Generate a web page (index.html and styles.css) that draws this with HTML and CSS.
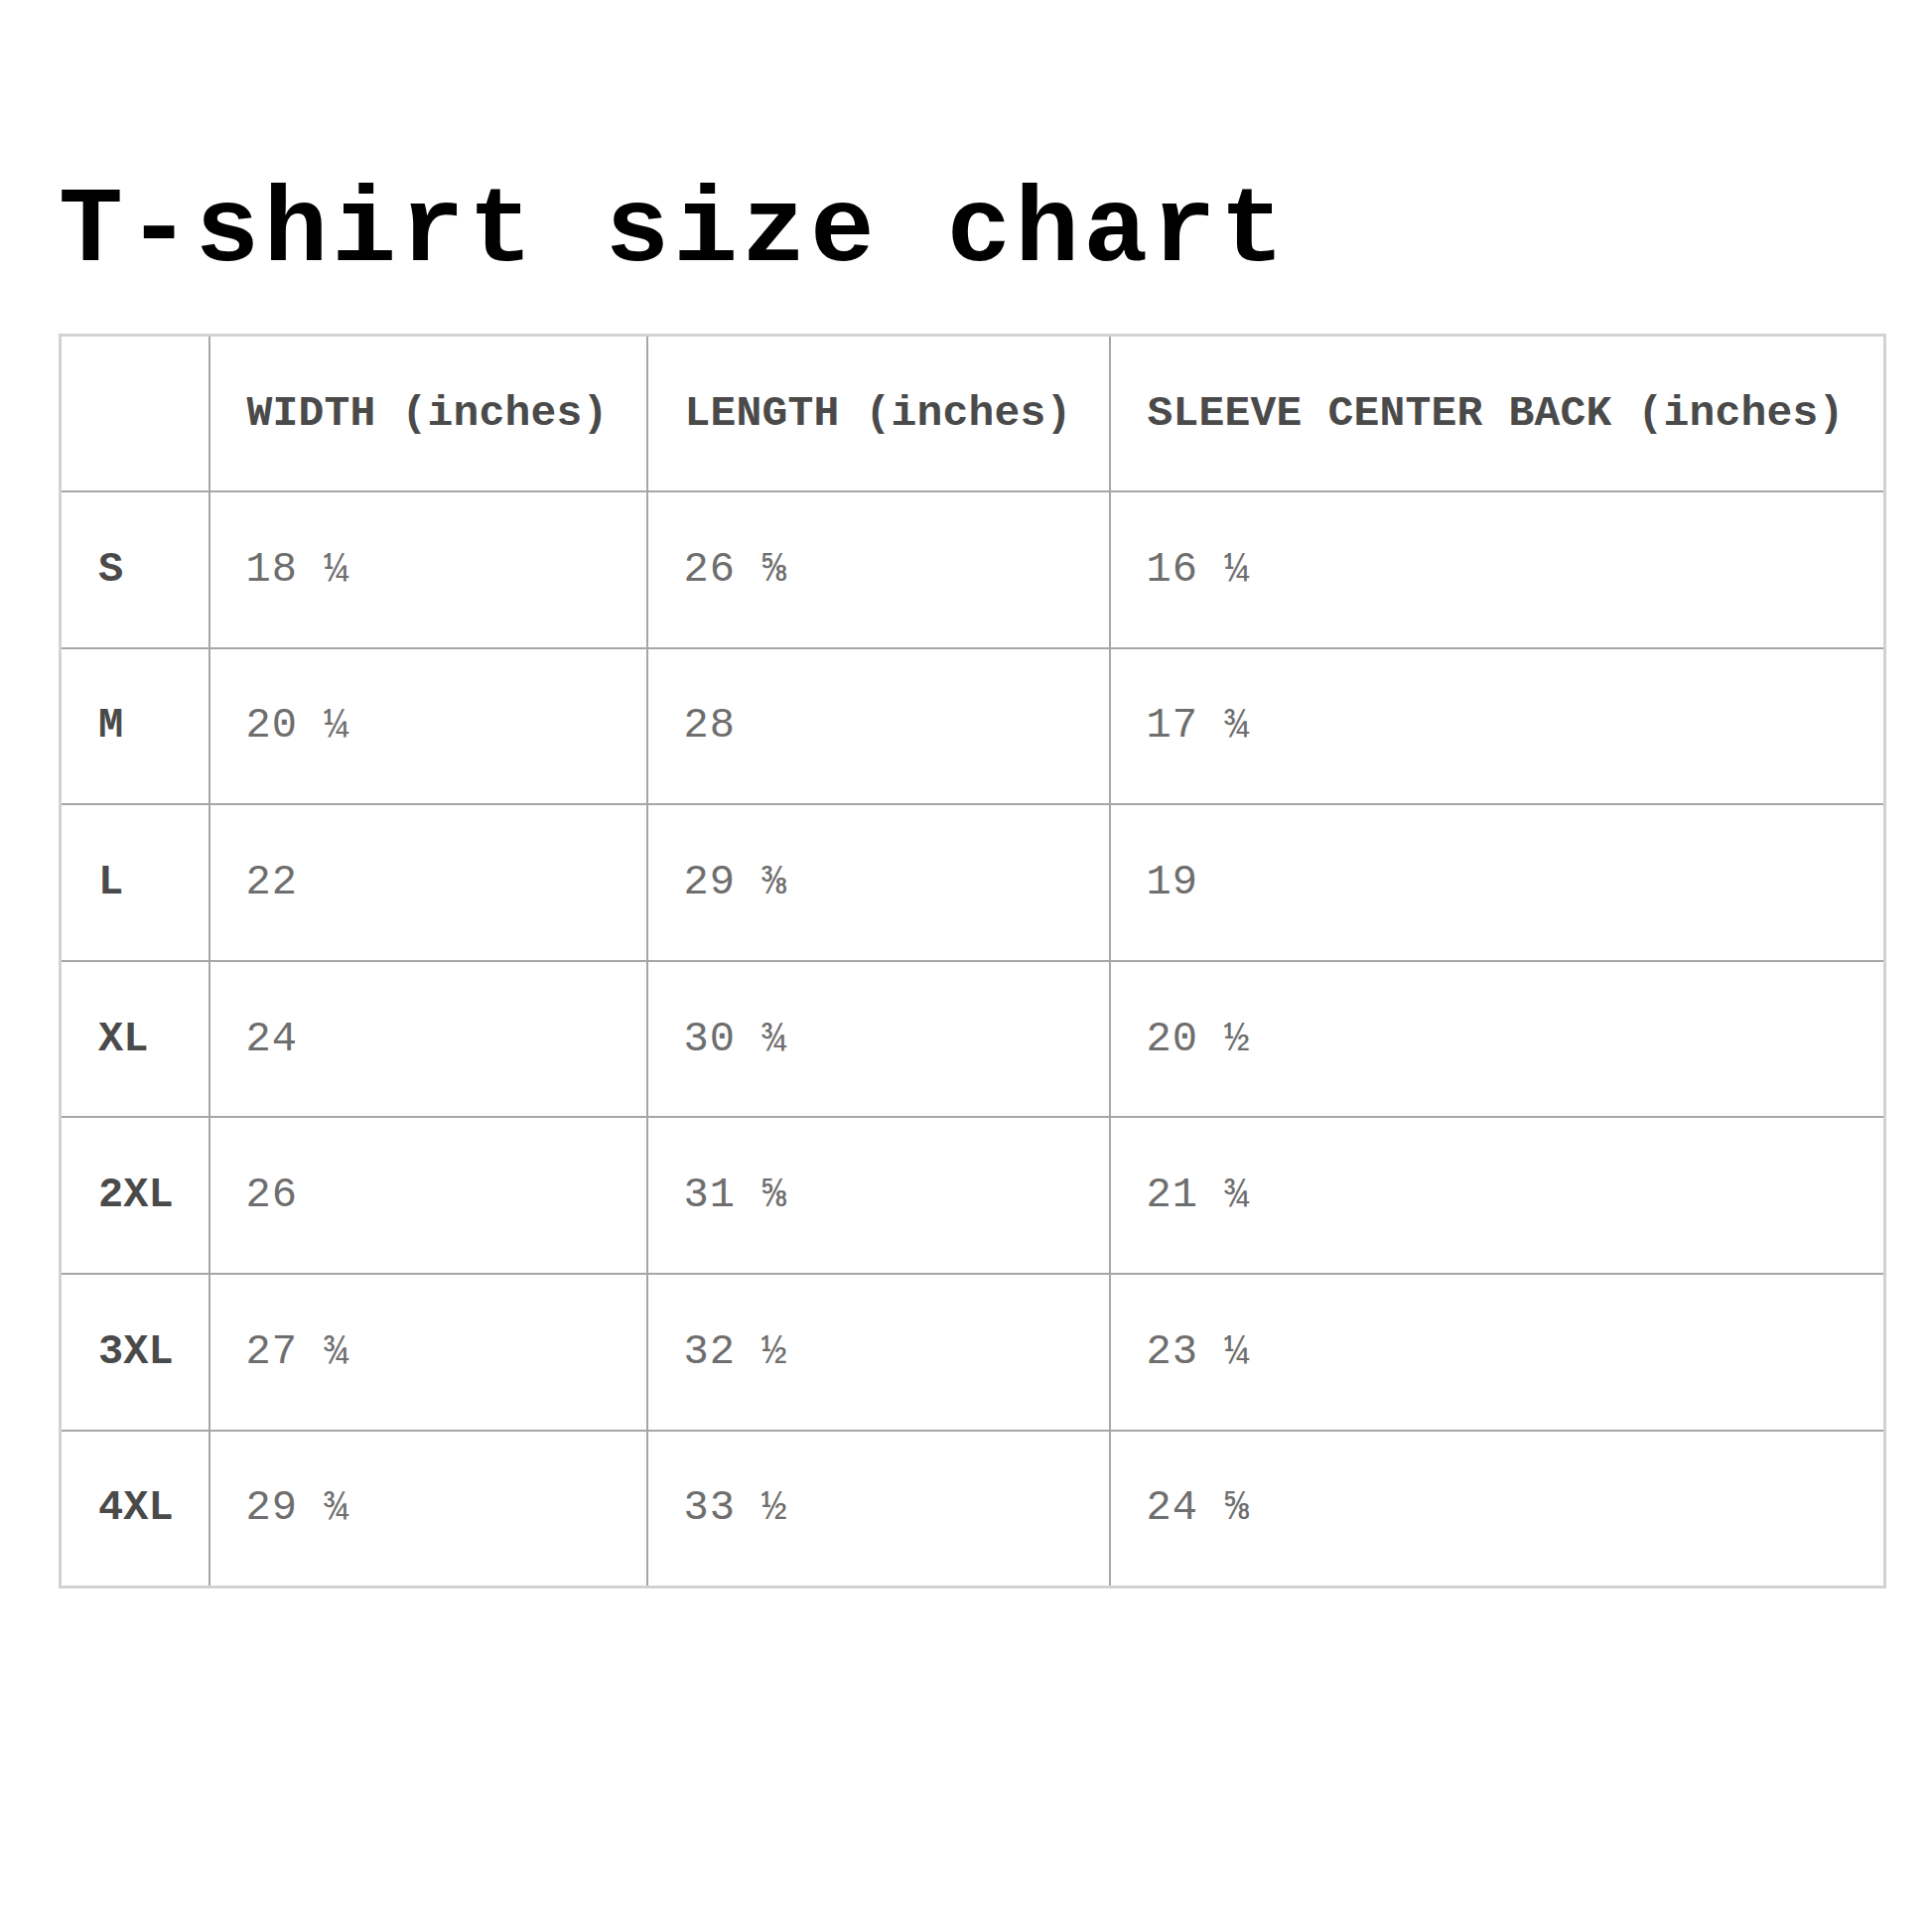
FILE: index.html
```html
<!DOCTYPE html>
<html lang="en">
<head>
<meta charset="utf-8">
<title>T-shirt size chart</title>
<link rel="stylesheet" href="styles.css">
</head>
<body>
<main class="page">
  <h1 class="title">T-shirt size chart</h1>
  <table class="chart">
    <colgroup>
      <col class="c-size">
      <col class="c-width">
      <col class="c-length">
      <col class="c-sleeve">
    </colgroup>
    <thead>
      <tr>
        <th></th>
        <th>WIDTH (inches)</th>
        <th>LENGTH (inches)</th>
        <th>SLEEVE CENTER BACK (inches)</th>
      </tr>
    </thead>
    <tbody>
      <tr><th>S</th><td>18 ¼</td><td>26 ⅝</td><td>16 ¼</td></tr>
      <tr><th>M</th><td>20 ¼</td><td>28</td><td>17 ¾</td></tr>
      <tr><th>L</th><td>22</td><td>29 ⅜</td><td>19</td></tr>
      <tr><th>XL</th><td>24</td><td>30 ¾</td><td>20 ½</td></tr>
      <tr><th>2XL</th><td>26</td><td>31 ⅝</td><td>21 ¾</td></tr>
      <tr><th>3XL</th><td>27 ¾</td><td>32 ½</td><td>23 ¼</td></tr>
      <tr><th>4XL</th><td>29 ¾</td><td>33 ½</td><td>24 ⅝</td></tr>
    </tbody>
  </table>
</main>
</body>
</html>
```

FILE: styles.css
```css
html, body {
  margin: 0;
  padding: 0;
  background: #ffffff;
}

.page {
  padding: 179px 0 0 59px;
  font-family: "Courier New", "Nimbus Mono PS", "FreeMono", "Liberation Mono", monospace;
}

.title {
  margin: 0 0 49px 0;
  font-size: 108px;
  line-height: 1;
  letter-spacing: 4px;
  font-weight: 700;
  color: #000000;
}

.chart {
  border-collapse: collapse;
  table-layout: fixed;
  width: 1838px;
  border: 3px solid #d2d2d2;
}

.c-size { width: 150px; }
.c-width { width: 441px; }
.c-length { width: 466px; }
.c-sleeve { width: 781px; }

.chart tr {
  height: 157.6px;
}

.chart th,
.chart td {
  border: 2px solid #a6a6a6;
  padding: 0 0 0 37px;
  text-align: left;
  vertical-align: middle;
  font-size: 42px;
  white-space: nowrap;
}

.chart th {
  font-weight: 700;
  color: #4a4a4a;
}

.chart thead th {
  font-size: 43px;
  letter-spacing: 0.2px;
}

.chart td {
  font-weight: 400;
  color: #6e6e6e;
  letter-spacing: 1px;
  padding-left: 36px;
}

.chart thead th:first-child { border-left-color: #d2d2d2; }
.chart thead th { border-top-color: #d2d2d2; }
.chart tr > :last-child { border-right-color: #d2d2d2; }
.chart tbody tr:last-child > * { border-bottom-color: #d2d2d2; }
.chart tbody th { border-left-color: #d2d2d2; }
```
